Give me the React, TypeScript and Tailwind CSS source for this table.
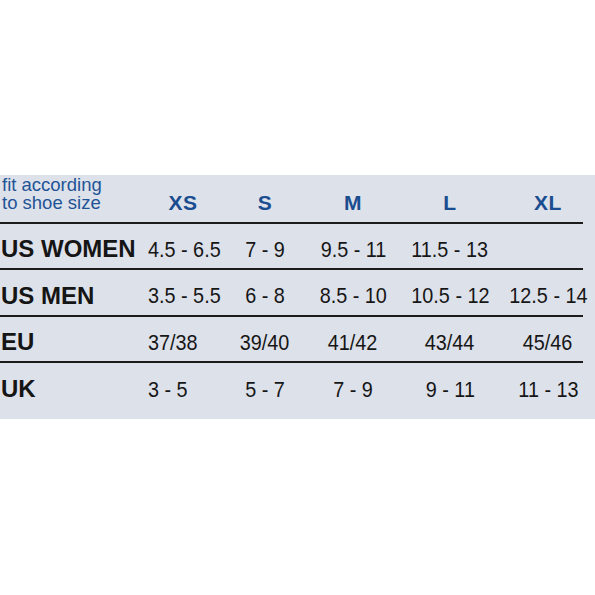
import React from "react";

const cols = ["w-[148px]", "w-[70px]", "w-[94px]", "w-[82px]", "w-[112px]", "w-[84px]"];

const rows: { label: string; vals: string[]; h: string }[] = [
  { label: "US WOMEN", vals: ["4.5 - 6.5", "7 - 9", "9.5 - 11", "11.5 - 13", ""], h: "h-[46px]" },
  { label: "US MEN", vals: ["3.5 - 5.5", "6 - 8", "8.5 - 10", "10.5 - 12", "12.5 - 14"], h: "h-[47px]" },
  { label: "EU", vals: ["37/38", "39/40", "41/42", "43/44", "45/46"], h: "h-[46px]" },
  { label: "UK", vals: ["3 - 5", "5 - 7", "7 - 9", "9 - 11", "11 - 13"], h: "h-[46px]" },
];

export default function App() {
  return (
    <div className="w-[595px] h-[595px] bg-white flex flex-col" style={{ fontFamily: '"Liberation Sans", Arial, sans-serif' }}>
      <div className="h-[175px] shrink-0" />
      <div className="h-[244px] shrink-0 bg-[#dde1ea] flex flex-col">
        <div className="w-[583px] h-[49px] shrink-0 flex items-start border-b-2 border-[#1c1c1c]">
          <div className={`${cols[0]} shrink-0 pl-[2px] pt-[1px] text-[18.5px] leading-[18px] text-[#1f5496]`}>
            <div>fit according</div>
            <div>to shoe size</div>
          </div>
          {["XS", "S", "M", "L", "XL"].map((h, i) => (
            <div
              key={h}
              className={`${cols[i + 1]} shrink-0 pt-[16px] text-center text-[21px] leading-[24px] font-bold tracking-[0.5px] text-[#1a4d8f]`}
            >
              {h}
            </div>
          ))}
        </div>
        {rows.map((r, ri) => (
          <div
            key={r.label}
            className={`w-[583px] ${r.h} shrink-0 pt-[6px] flex items-center ${ri < 3 ? "border-b-2 border-[#1c1c1c]" : ""}`}
          >
            <div className={`${cols[0]} shrink-0 pl-[1px] text-[24px] font-bold text-[#151515] whitespace-nowrap`}>{r.label}</div>
            {r.vals.map((v, i) => (
              <div
                key={i}
                className={`${cols[i + 1]} shrink-0 flex ${i === 0 ? "justify-start" : "justify-center"}`}
              >
                <span
                  className={`inline-block text-[22px] text-[#161616] whitespace-nowrap scale-x-[0.9] ${i === 0 ? "origin-left" : "origin-center"}`}
                >
                  {v}
                </span>
              </div>
            ))}
          </div>
        ))}
      </div>
    </div>
  );
}
